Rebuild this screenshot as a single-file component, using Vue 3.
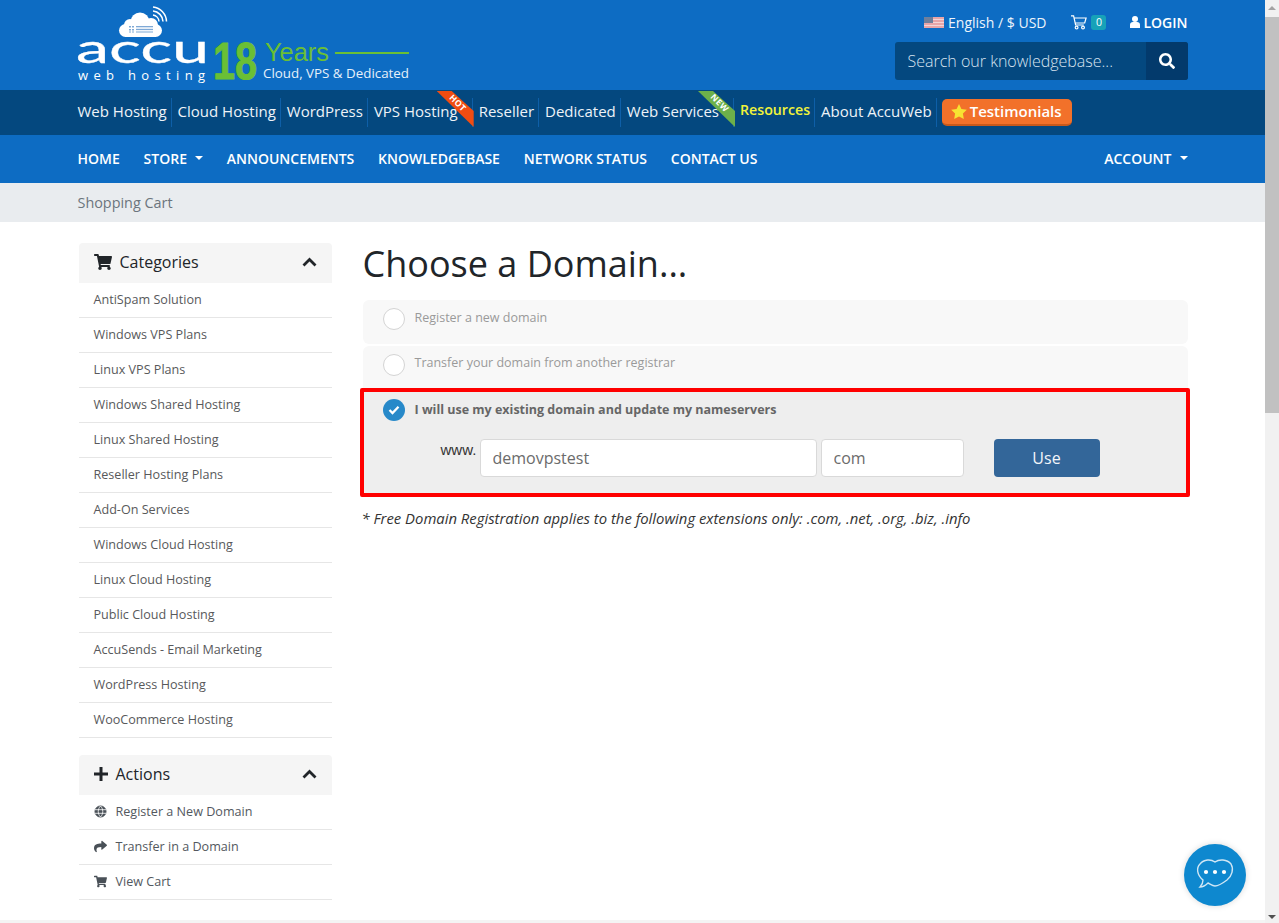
<script setup>
const topLinks = [
  { t: 'Web Hosting' }, { t: 'Cloud Hosting' }, { t: 'WordPress' },
  { t: 'VPS Hosting', ribbon: 'hot' }, { t: 'Reseller' }, { t: 'Dedicated' },
  { t: 'Web Services', ribbon: 'new' }, { t: 'Resources', yellow: true }, { t: 'About AccuWeb' }
]
const navLeft = [
  { t: 'HOME' }, { t: 'STORE', caret: true }, { t: 'ANNOUNCEMENTS' },
  { t: 'KNOWLEDGEBASE' }, { t: 'NETWORK STATUS' }, { t: 'CONTACT US' }
]
const categories = ['AntiSpam Solution', 'Windows VPS Plans', 'Linux VPS Plans', 'Windows Shared Hosting', 'Linux Shared Hosting', 'Reseller Hosting Plans', 'Add-On Services', 'Windows Cloud Hosting', 'Linux Cloud Hosting', 'Public Cloud Hosting', 'AccuSends - Email Marketing', 'WordPress Hosting', 'WooCommerce Hosting']
const cartPath = 'M528.12 301.319l47.273-208C578.806 78.301 567.391 64 551.99 64H159.208l-9.166-44.81C147.758 8.021 137.93 0 126.529 0H24C10.745 0 0 10.745 0 24v16c0 13.255 10.745 24 24 24h69.883l70.248 343.435C147.325 417.1 136 435.222 136 456c0 30.928 25.072 56 56 56s56-25.072 56-56c0-15.674-6.447-29.835-16.824-40h209.647C430.447 426.165 424 440.326 424 456c0 30.928 25.072 56 56 56s56-25.072 56-56c0-22.172-12.888-41.332-31.579-50.405l5.517-24.276c3.413-15.018-8.002-29.319-23.403-29.319H218.117l-6.545-32h293.145c11.206 0 20.92-7.754 23.403-18.681z'
const sharePath = 'M503.691 189.836L327.687 37.851C312.281 24.546 288 35.347 288 56.015v80.053C127.371 137.907 0 170.1 0 322.326c0 61.441 39.581 122.309 83.333 154.132 13.653 9.931 33.111-2.533 28.077-18.631C66.066 312.814 132.917 274.316 288 272.085V360c0 20.7 24.3 31.453 39.687 18.164l176.004-152c11.071-9.562 11.086-26.753 0-36.328z'
const searchPath = 'M505 442.7L405.3 343c-4.5-4.5-10.6-7-17-7H372c27.6-35.3 44-79.7 44-128C416 93.1 322.9 0 208 0S0 93.1 0 208s93.1 208 208 208c48.3 0 92.7-16.4 128-44v16.3c0 6.4 2.5 12.5 7 17l99.7 99.7c9.4 9.4 24.6 9.4 33.9 0l28.3-28.3c9.4-9.4 9.4-24.6.1-34zM208 336c-70.7 0-128-57.2-128-128 0-70.7 57.2-128 128-128 70.7 0 128 57.2 128 128 0 70.7-57.2 128-128 128z'
</script>

<template>
  <div class="shell">
    <div class="page">
      <header class="head">
        <div class="wrap head-in">
          <svg class="logo" width="332" height="85" viewBox="0 0 332 85">
            <g fill="#fff">
              <rect x="41" y="24" width="43" height="13" rx="6.500" />
              <circle cx="62" cy="22" r="9.500" /><circle cx="52" cy="25" r="6" /><circle cx="73" cy="25" r="7" />
            </g>
            <g fill="#7fa9d6">
              <rect x="51" y="26" width="2" height="1.500" /><rect x="54" y="26" width="2" height="1.500" />
              <rect x="51" y="29" width="2" height="1.500" /><rect x="54" y="29" width="2" height="1.500" />
              <rect x="51" y="31.500" width="2" height="1" /><rect x="54" y="31.500" width="2" height="1" />
              <rect x="58" y="26" width="17" height="1.300" /><rect x="58" y="28.800" width="17" height="1.300" /><rect x="58" y="31.500" width="17" height="1" />
            </g>
            <g fill="none" stroke="#fff" stroke-width="1.500">
              <path d="M75 15 a7 7 0 0 1 6 6.500" /><path d="M75 11 a11 11 0 0 1 10 10.500" /><path d="M75 7 a15 15 0 0 1 13.500 14.500" />
            </g>
            <text x="-2" y="63" font-family="'Lato', sans-serif" font-size="40" fill="#fff" stroke="#fff" stroke-width="0.300" textLength="133" lengthAdjust="spacingAndGlyphs">accu</text>
            <text x="0" y="80" font-family="'Open Sans', sans-serif" font-size="13" fill="#fff" textLength="127" lengthAdjust="spacing">web hosting</text>
            <text x="135" y="79" font-family="'Liberation Sans', sans-serif" font-weight="700" font-size="52" fill="#6abf35" stroke="#6abf35" stroke-width="1" textLength="44" lengthAdjust="spacingAndGlyphs">18</text>
            <text x="187" y="61" font-family="'Liberation Sans', sans-serif" font-size="25" fill="#6abf35" textLength="64" lengthAdjust="spacingAndGlyphs">Years</text>
            <rect x="257" y="52" width="74" height="2" fill="#6abf35" />
            <text x="185" y="78" font-family="'Open Sans', sans-serif" font-size="12.400" fill="#e6f0fa" textLength="146" lengthAdjust="spacingAndGlyphs">Cloud, VPS &amp; Dedicated</text>
          </svg>
          <div class="head-right">
            <div class="util">
              <span class="lang">
                <svg class="flag" width="20" height="11" viewBox="0 0 20 11">
                  <rect width="20" height="11" fill="#e8a5a8" />
                  <rect y="2" width="20" height="1" fill="#f3d5d6" /><rect y="5" width="20" height="1" fill="#f3d5d6" /><rect y="8" width="20" height="1" fill="#f3d5d6" />
                  <rect width="9" height="6" fill="#6e7f9c" />
                </svg>
                English / $ USD
              </span>
              <span class="cart">
                <svg width="16" height="15" viewBox="0 0 16 15" fill="none" stroke="#fff" stroke-width="1.200"><path d="M0 .8 h2.600 l2 9.200 h8.200 M3.100 3 h12 l-1.400 5 h-9.100" /><circle cx="5.600" cy="12.600" r="1.400" /><circle cx="12" cy="12.600" r="1.400" /></svg>
                <span class="badge">0</span>
              </span>
              <span class="login">
                <svg width="10" height="12" viewBox="0 0 10 12" fill="#fff"><circle cx="5" cy="3" r="3" /><path d="M0 12 v-3.200 a3 3 0 0 1 3-2.800 h4 a3 3 0 0 1 3 2.800 v3.200 z" /></svg>
                LOGIN
              </span>
            </div>
            <div class="search">
              <span class="ph">Search our knowledgebase...</span>
              <span class="sbtn"><svg width="16" height="16" viewBox="0 0 512 512" fill="#fff"><path :d="searchPath" /></svg></span>
            </div>
          </div>
        </div>
      </header>

      <div class="topbar">
        <div class="wrap topbar-in">
          <a v-for="l in topLinks" :key="l.t" class="tl" :class="{ rib: l.ribbon, yellow: l.yellow }">
            {{ l.t }}
            <span v-if="l.ribbon === 'hot'" class="ribbon hot"><span>HOT</span></span>
            <span v-if="l.ribbon === 'new'" class="ribbon new"><span>NEW</span></span>
          </a>
          <a class="testi">
            <svg width="16" height="15" viewBox="0 0 24 23" fill="#f7e332"><path d="M12 0l3.700 7.600 8.300 1.200-6 5.900 1.400 8.300L12 19l-7.400 4L6 14.700 0 8.800l8.300-1.200z" /></svg>
            Testimonials
          </a>
        </div>
      </div>

      <nav class="nav">
        <div class="wrap nav-in">
          <a v-for="n in navLeft" :key="n.t" class="ni">{{ n.t }}<i v-if="n.caret" class="caret"></i></a>
          <a class="ni right">ACCOUNT<i class="caret"></i></a>
        </div>
      </nav>

      <div class="crumb"><div class="wrap">Shopping Cart</div></div>

      <div class="wrap body">
        <aside class="side">
          <section class="panel">
            <div class="ph-h">
              <svg width="18" height="16" viewBox="0 0 576 512" fill="#212529"><path :d="cartPath" /></svg>
              <span>Categories</span>
              <svg class="chev" width="15" height="10" viewBox="0 0 15 10" fill="none" stroke="#212529" stroke-width="2.800"><path d="M1.500 8.500 L7.500 2.500 L13.500 8.500" /></svg>
            </div>
            <a v-for="c in categories" :key="c" class="it">{{ c }}</a>
          </section>
          <section class="panel second">
            <div class="ph-h">
              <svg width="14" height="14" viewBox="0 0 14 14" fill="#212529"><path d="M5.500 0h3v5.500H14v3H8.500V14h-3V8.500H0v-3h5.500z" /></svg>
              <span>Actions</span>
              <svg class="chev" width="15" height="10" viewBox="0 0 15 10" fill="none" stroke="#212529" stroke-width="2.800"><path d="M1.500 8.500 L7.500 2.500 L13.500 8.500" /></svg>
            </div>
            <a class="it act">
              <svg width="13" height="13" viewBox="0 0 13 13" fill="none" stroke="#495057"><circle cx="6.500" cy="6.500" r="5.500" fill="#495057" /><path stroke="#fff" stroke-width=".8" d="M1 4.700h11M1 8.300h11M6.500 1c-3 3-3 8 0 11M6.500 1c3 3 3 8 0 11" /></svg>
              Register a New Domain
            </a>
            <a class="it act">
              <svg width="13" height="13" viewBox="0 0 512 512" fill="#495057"><path :d="sharePath" /></svg>
              Transfer in a Domain
            </a>
            <a class="it act">
              <svg width="14" height="13" viewBox="0 0 576 512" fill="#495057"><path :d="cartPath" /></svg>
              View Cart
            </a>
          </section>
        </aside>

        <main class="content">
          <h1>Choose a Domain...</h1>
          <div class="opt"><i class="radio"></i><span class="first">Register a new domain</span></div>
          <div class="opt opt2"><i class="radio"></i><span>Transfer your domain from another registrar</span></div>
          <div class="chosen">
            <div class="chosen-h">
              <i class="radio on">
                <svg width="12" height="10" viewBox="0 0 12 10" fill="none" stroke="#fff" stroke-width="2.300"><path d="M1.500 5 L4.500 8 L10.500 1.800" /></svg>
              </i>
              <b>I will use my existing domain and update my nameservers</b>
            </div>
            <div class="form">
              <span class="www">www.</span>
              <input class="inp sld" value="demovpstest" />
              <input class="inp tld" value="com" />
              <button class="use">Use</button>
            </div>
          </div>
          <p class="note"><em>* Free Domain Registration applies to the following extensions only: .com, .net, .org, .biz, .info</em></p>
        </main>
      </div>
      <div class="foot"></div>

      <div class="chat">
        <svg width="40" height="34" viewBox="0 0 40 34" fill="none">
          <path d="M8 22 C2 17 1 10 5 6 C9 1 16 1 20 4 C24 1 32 1 36 6 C39 11 37 18 32 22 C28 25 24 28 20 28 C18 28 15 26 13 25 C11 27 8 29 5 29 C7 27 8 25 8 22 Z" stroke="#cfe6f5" stroke-width="1.400" />
          <circle cx="11" cy="14" r="2.100" fill="#fff" /><circle cx="20" cy="14" r="2.100" fill="#fff" /><circle cx="29" cy="14" r="2.100" fill="#fff" />
        </svg>
      </div>
    </div>
    <div class="sb">
      <i class="arr up"></i>
      <div class="thumb"></div>
      <i class="arr down"></i>
    </div>
  </div>
</template>

<style>
html, body { margin: 0; height: 100%; overflow: hidden; background: #fff; }
</style>

<style scoped>
* { box-sizing: border-box; }
.shell { display: flex; width: 1279px; height: 923px; overflow: hidden; font-family: "Open Sans", sans-serif; color: #212529; }
.page { width: 1265px; height: 923px; position: relative; overflow: hidden; background: #fff; }
.wrap { width: 1110px; margin: 0 auto; }
.sb { width: 14px; height: 923px; background: #f1f1f1; display: flex; flex-direction: column; align-items: center; }
.thumb { width: 14px; height: 396px; background: #c1c1c1; margin-top: 7px; }
.arr { width: 0; height: 0; border-left: 4px solid transparent; border-right: 4px solid transparent; }
.arr.up { border-bottom: 4px solid #a3a3a3; margin-top: 6px; }
.arr.down { border-top: 4px solid #505050; margin-top: auto; margin-bottom: 4px; }

.head { background: #0d6cc3; height: 90px; }
.head-in { display: flex; justify-content: space-between; height: 90px; }
.logo { display: block; flex: none; overflow: visible; }
.head-right { width: 293px; display: flex; flex-direction: column; align-items: flex-end; }
.util { display: flex; align-items: center; height: 42px; padding-top: 2px; color: #fff; font-size: 14px; }
.lang { display: flex; align-items: center; gap: 4px; margin-right: 25px; color: #eef4fb; }
.flag { display: block; }
.cart { display: flex; align-items: center; gap: 4px; margin-right: 24px; }
.badge { background: #17a2b8; color: #fff; font-size: 10.500px; line-height: 15px; width: 15px; height: 15px; text-align: center; border-radius: 3px; }
.login { display: flex; align-items: center; gap: 3px; font-weight: 600; }
.search { width: 293px; height: 38px; background: #04487f; border-radius: 3px; display: flex; align-items: center; overflow: hidden; }
.ph { flex: 1; padding-left: 13px; font-size: 16px; font-weight: 300; color: #d7e3ef; }
.sbtn { width: 42px; height: 38px; background: #033a6c; display: flex; align-items: center; justify-content: center; }

.topbar { background: #04487f; height: 45px; }
.topbar-in { display: flex; align-items: center; height: 45px; }
.tl { position: relative; display: block; font-size: 15px; line-height: 20px; color: #eef3f8; padding-right: 4px; margin-right: 6px; border-right: 1px solid #0e5fa8; white-space: nowrap; height: 29px; padding-top: 3px; }
.tl.rib { padding-right: 14px; }
.tl.yellow { color: #f1f33a; font-size: 14.200px; font-weight: 600; padding-top: 2px; }
.tl:nth-child(9) { margin-right: 5px; }
.ribbon { position: absolute; top: -7px; right: -2px; width: 37px; height: 36px; clip-path: polygon(0 0, 15px 0, 100% 20px, 100% 100%); overflow: hidden; }
.ribbon span { position: absolute; left: 11px; top: 7px; color: #fff; font-size: 8.500px; font-weight: 700; letter-spacing: .5px; line-height: 10px; transform: rotate(45deg); }
.ribbon.hot { background: #f04c12; }
.ribbon.new { background: #6db04a; }
.testi { display: flex; align-items: center; gap: 3px; width: 130px; height: 27px; padding: 0 0 1px 9px; background: #f2712a; border-bottom: 2px solid #c9591b; border-radius: 5px; color: #fff; font-size: 15px; font-weight: 600; white-space: nowrap; }

.nav { background: #0d6cc3; height: 48px; }
.nav-in { display: flex; align-items: center; height: 48px; gap: 23.800px; padding-bottom: 2px; }
.ni { font-size: 14px; font-weight: 600; color: #fff; white-space: nowrap; display: flex; align-items: center; }
.ni.right { margin-left: auto; }
.caret { display: inline-block; margin-left: 8px; width: 0; height: 0; border-left: 4px solid transparent; border-right: 4px solid transparent; border-top: 4px solid #fff; }

.crumb { background: #e9ecef; height: 39px; line-height: 39px; font-size: 14.400px; color: #6c757d; }

.body { display: flex; padding-top: 21px; }
.side { width: 253px; margin-left: 1px; flex: none; }
.panel.second { margin-top: 17px; }
.ph-h { height: 40px; background: #f5f5f5; border-radius: 4px 4px 0 0; display: flex; align-items: center; padding: 0 15px 2px 15px; gap: 8px; font-size: 16px; color: #212529; }
.chev { margin-left: auto; }
.it { display: flex; align-items: center; height: 35px; padding: 0 0 1px 15px; border-bottom: 1px solid #e6e6e6; font-size: 12.600px; color: #58595b; }
.act { gap: 9px; color: #53585e; }
.act svg { width: 13px; flex: none; }

.content { margin-left: 31px; width: 826px; position: relative; }
h1 { margin: 0; font-size: 36px; font-weight: 400; line-height: 41px; height: 57px; color: #212529; }
.opt { width: 825px; height: 44px; background: #f8f8f8; border-radius: 6px; display: flex; align-items: flex-start; padding: 8px 0 0 20px; font-size: 12.500px; color: #9a9a9a; }
.opt span { margin-left: 10px; line-height: 18px; }
.opt span.first { margin-top: 0; line-height: 20px; }
.opt2 { margin-top: 2px; height: 42px; border-radius: 6px 6px 0 0; }
.radio { width: 22px; height: 22px; border-radius: 50%; border: 1px solid #d4d4d4; background: #fff; flex: none; display: flex; align-items: center; justify-content: center; }
.radio.on { background: #2789c9; border: 0; }
.chosen { width: 830px; height: 109px; margin-left: -3px; background: #eee; border: 4px solid #f00; border-radius: 2px; padding: 7px 0 0 19px; }
.chosen-h { display: flex; align-items: flex-start; font-size: 12.500px; color: #666; }
.chosen-h b { font-weight: 700; margin-left: 10px; line-height: 22px; }
.form { display: flex; align-items: flex-start; margin-top: 18px; margin-left: 58px; }
.www { width: 35px; margin-right: 4px; font-family: "Liberation Sans", sans-serif; font-size: 15px; color: #333; line-height: 18px; margin-top: 2px; white-space: nowrap; }
.inp { height: 38px; border: 1px solid #d9d9d9; border-radius: 4px; background: #fff; padding: 0 12px; font: 16px "Open Sans", sans-serif; color: #6b6b6b; outline: none; }
.sld { width: 337px; }
.tld { width: 143px; margin-left: 4px; }
.use { width: 106px; height: 38px; margin-left: 30px; background: #336699; color: #f2f5f9; border: 0; border-radius: 4px; font: 16px "Open Sans", sans-serif; }
.note { margin: 11px 0 0 -1px; font-size: 14.850px; line-height: 20px; color: #333; }

.foot { position: absolute; left: 0; right: 0; top: 920px; height: 3px; background: #f4f4f4; }
.chat { position: absolute; left: 1184px; top: 844px; width: 62px; height: 62px; border-radius: 50%; background: #0e88cf; box-shadow: 0 0 6px rgba(0,0,0,.15); display: flex; align-items: center; justify-content: center; }
</style>
